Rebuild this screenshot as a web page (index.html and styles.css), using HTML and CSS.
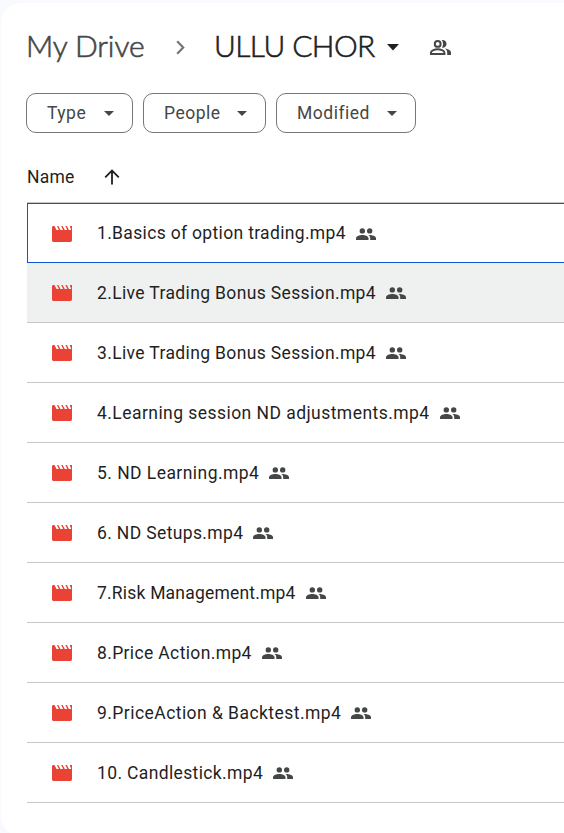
FILE: index.html
```html
<!DOCTYPE html>
<html lang="en">
<head>
  <meta charset="UTF-8">
  <title>ULLU CHOR - Drive</title>
  <link rel="stylesheet" href="styles.css">
</head>
<body>
  <svg class="sprite" width="0" height="0">
    <symbol id="movie" viewBox="0 0 20 16">
      <path d="M1.200 0h1.300l2 4h2.400L4.900 0h1.400l2.200 4h2.600L9.200 0h1.400l2.200 4h2.400L13.400 0h1.500l2 4h2.300L17.700 0H20v14.200c0 1-.8 1.800-1.800 1.800H1.800C.8 16 0 15.200 0 14.200V1.500C0 .8.500.2 1.200 0z"/>
    </symbol>
    <symbol id="people" viewBox="0 0 20 12">
      <circle cx="6.300" cy="2.900" r="2.700"/>
      <circle cx="13.700" cy="2.900" r="2.700"/>
      <path d="M0 12v-1.700C0 8 3.700 6.900 6.300 6.900s6.200 1.100 6.200 3.400V12z"/>
      <path d="M13.100 6.900c3 0 6.900 1 6.900 3.400V12h-5.800v-1.700c0-1.500-.6-2.600-1.900-3.300z"/>
    </symbol>
  </svg>

  <div class="panel">
    <div class="breadcrumb">
      <span class="parent">My Drive</span>
      <svg class="chevron" viewBox="0 0 9 15"><path d="M1.200 1.200l6 6.300-6 6.300"/></svg>
      <span class="current">ULLU CHOR</span>
      <svg class="caret-big" viewBox="0 0 12 7"><path d="M0 0h12L6 6.500z"/></svg>
      <svg class="shared" viewBox="0 0 21 15">
        <circle class="line" cx="7.700" cy="3.900" r="2.900"/>
        <path class="line" d="M1 14v-1.500c0-2 4-3.200 6.700-3.200s6.700 1.200 6.700 3.200V14z"/>
        <path d="M11.800.2c2.400-.5 4.700 1.300 4.700 3.700s-2.300 4.200-4.700 3.700c1.600-2 1.600-5.400 0-7.400zM15 8.500c3 .5 6 1.800 6 4V15h-3.800v-2.500c0-1.700-.9-3-2.200-4z"/>
      </svg>
    </div>

    <div class="filters">
      <button class="chip type">Type<svg class="caret" viewBox="0 0 10 5"><path d="M0 0h10L5 5z"/></svg></button>
      <button class="chip owner">People<svg class="caret" viewBox="0 0 10 5"><path d="M0 0h10L5 5z"/></svg></button>
      <button class="chip modified">Modified<svg class="caret" viewBox="0 0 10 5"><path d="M0 0h10L5 5z"/></svg></button>
    </div>

    <div class="list-header">
      <span>Name</span>
      <svg class="arrow" viewBox="0 0 16 16"><path d="M8 15.500V1.500M1.200 8.300L8 1.500l6.800 6.800"/></svg>
    </div>

    <div class="list">
      <div class="row focused"><svg class="movie"><use href="#movie"/></svg><span class="name">1.Basics of option trading.mp4</span><svg class="people"><use href="#people"/></svg></div>
      <div class="row hovered"><svg class="movie"><use href="#movie"/></svg><span class="name">2.Live Trading Bonus Session.mp4</span><svg class="people"><use href="#people"/></svg></div>
      <div class="row"><svg class="movie"><use href="#movie"/></svg><span class="name">3.Live Trading Bonus Session.mp4</span><svg class="people"><use href="#people"/></svg></div>
      <div class="row"><svg class="movie"><use href="#movie"/></svg><span class="name wide">4.Learning session ND adjustments.mp4</span><svg class="people"><use href="#people"/></svg></div>
      <div class="row"><svg class="movie"><use href="#movie"/></svg><span class="name wide">5. ND Learning.mp4</span><svg class="people"><use href="#people"/></svg></div>
      <div class="row"><svg class="movie"><use href="#movie"/></svg><span class="name">6. ND Setups.mp4</span><svg class="people"><use href="#people"/></svg></div>
      <div class="row"><svg class="movie"><use href="#movie"/></svg><span class="name tight">7.Risk Management.mp4</span><svg class="people"><use href="#people"/></svg></div>
      <div class="row"><svg class="movie"><use href="#movie"/></svg><span class="name">8.Price Action.mp4</span><svg class="people"><use href="#people"/></svg></div>
      <div class="row"><svg class="movie"><use href="#movie"/></svg><span class="name wide">9.PriceAction &amp; Backtest.mp4</span><svg class="people"><use href="#people"/></svg></div>
      <div class="row"><svg class="movie"><use href="#movie"/></svg><span class="name">10. Candlestick.mp4</span><svg class="people"><use href="#people"/></svg></div>
    </div>
  </div>
</body>
</html>
```
FILE: styles.css
```css
* {
  box-sizing: border-box;
}

body {
  margin: 0;
  height: 833px;
  overflow: hidden;
  background: #f8fafd;
  font-family: Roboto, "Liberation Sans", sans-serif;
  font-size: 17.5px;
  color: #1f1f1f;
}

.sprite {
  display: block;
}

svg {
  flex: none;
}

.panel {
  height: 833px;
  margin: 3px 0 0 1px;
  padding-left: 26px;
  background: #fff;
  border-radius: 20px 0 0 20px;
}

.breadcrumb {
  display: flex;
  align-items: center;
  height: 88px;
  font-family: Lato, sans-serif;
  font-size: 30px;
  font-weight: 300;
  white-space: nowrap;
  -webkit-text-stroke: 0.6px;
}

.breadcrumb span {
  margin: -5px 0 0 -1px;
}

.parent {
  width: 150px;
  color: #444746;
  letter-spacing: -0.1px;
}

.current {
  width: 173px;
  letter-spacing: -0.6px;
}

.chevron {
  width: 9px;
  height: 15px;
  margin-right: 30px;
  fill: none;
  stroke: #747775;
  stroke-width: 2.2;
}

.caret-big {
  width: 12px;
  height: 7px;
  margin-top: 1px;
  fill: #1f1f1f;
}

.shared {
  width: 21px;
  height: 15px;
  margin-left: 31px;
  fill: #444746;
}

.shared .line {
  fill: none;
  stroke: #444746;
  stroke-width: 2;
}

.breadcrumb svg {
  -webkit-text-stroke: 0;
}

.filters {
  display: flex;
  gap: 10px;
  margin: 2px 0 0 -1px;
}

.chip {
  display: flex;
  align-items: center;
  justify-content: space-between;
  height: 40px;
  padding: 0 18px 0 20px;
  border: 1px solid #747775;
  border-radius: 10px;
  background: #fff;
  color: #444746;
  font-family: inherit;
  font-size: 17.5px;
  font-weight: 400;
  letter-spacing: 0.5px;
}

.type {
  width: 107px;
}

.owner {
  width: 123px;
}

.modified {
  width: 140px;
}

.caret {
  width: 10px;
  height: 5px;
  margin-top: 1px;
  fill: #444746;
}

.list-header {
  display: flex;
  align-items: center;
  height: 69px;
  padding-top: 19px;
}

.list-header span {
  width: 77px;
  letter-spacing: 0.2px;
}

.arrow {
  width: 16px;
  height: 16px;
  fill: none;
  stroke: #1f1f1f;
  stroke-width: 1.8;
}

.list {
  border-top: 1px solid #c4c7c5;
}

.row {
  display: flex;
  align-items: center;
  height: 60px;
  padding-left: 25px;
  border-bottom: 1px solid #c4c7c5;
}

.focused {
  padding-left: 24px;
  border: 1px solid #0b57d0;
  border-right: none;
}

.hovered {
  background: #eff1f1;
}

.name {
  margin: 0 10px 0 25px;
  letter-spacing: 0.36px;
  white-space: nowrap;
}

.focused .name {
  letter-spacing: 0.33px;
}

.name.tight {
  letter-spacing: 0.2px;
}

.name.wide {
  letter-spacing: 0.45px;
}

.movie {
  width: 20px;
  height: 16px;
  margin-top: 1px;
  fill: #ea4335;
}

.people {
  width: 20px;
  height: 12px;
  margin-top: 1px;
  fill: #444746;
}
```
